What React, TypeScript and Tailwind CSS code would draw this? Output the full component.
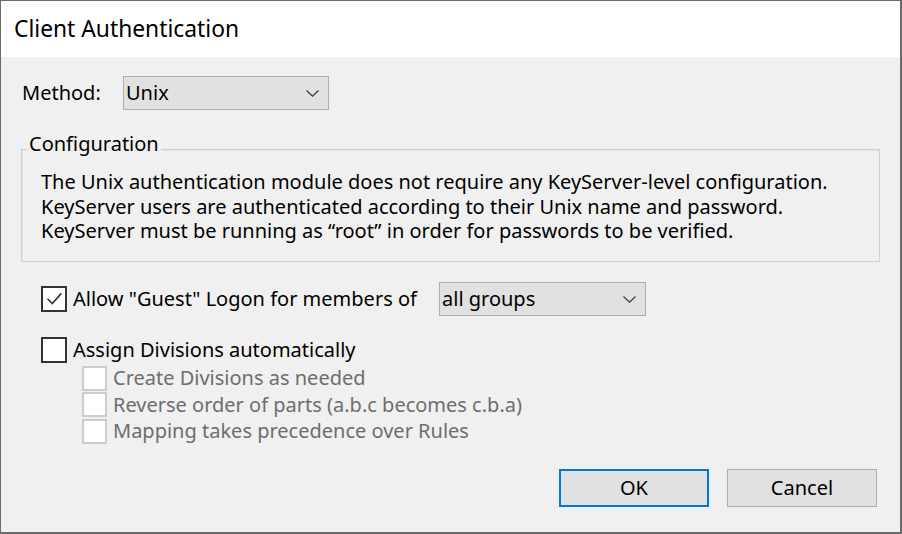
import React from "react";

function Chevron() {
  return (
    <svg width="13" height="7" viewBox="0 0 13 7" className="shrink-0">
      <path d="M0.5 0.5 L6.5 6.2 L12.5 0.5" fill="none" stroke="#333333" strokeWidth="1.1" />
    </svg>
  );
}

function Dropdown({ value, width }: { value: string; width: string }) {
  return (
    <div className={`flex h-[34px] items-center justify-between border border-[#adadad] bg-[#e1e1e1] pl-[2px] pr-[9px] ${width}`}>
      <span className="leading-[24px] text-black">{value}</span>
      <Chevron />
    </div>
  );
}

function CheckBox({ checked, disabled }: { checked?: boolean; disabled?: boolean }) {
  return (
    <div
      className={
        disabled
          ? "flex h-[25px] w-[25px] shrink-0 items-center justify-center border-2 border-[#cccccc] bg-white"
          : "flex h-[26px] w-[26px] shrink-0 items-center justify-center border-2 border-[#333333] bg-white"
      }
    >
      {checked && (
        <svg width="20" height="20" viewBox="0 0 20 20">
          <path d="M3.5 9.8 L8.3 14.6 L17.3 4.4" fill="none" stroke="#333333" strokeWidth="1.6" />
        </svg>
      )}
    </div>
  );
}

export default function App() {
  return (
    <div className="flex h-[534px] w-[902px] flex-col border-b-2 border-l border-r-2 border-t border-[#6b6b6b] bg-[#f0f0f0] font-['Noto_Sans',sans-serif] text-[20px] text-black">
      <div className="flex h-[56px] items-center bg-white pl-[13px]">
        <span className="text-[22.8px] leading-[30px] text-black">Client Authentication</span>
      </div>

      <div className="flex flex-1 flex-col pl-[20px] pr-[23px]">
        <div className="mt-[19px] flex items-center">
          <span className="ml-[1px] w-[101px] leading-[24px]">Method:</span>
          <Dropdown value="Unix" width="w-[206px]" />
        </div>

        <div className="relative mt-[39px] w-[859px] border border-[#cfcfcf] pb-[17.5px] pl-[19px] pt-[20px] shadow-[inset_1px_1px_0_#e4e4e4]">
          <span className="absolute left-[5px] top-[-18px] bg-[#f0f0f0] px-[2px] leading-[24px]">Configuration</span>
          <p className="leading-[24.5px]">
            The Unix authentication module does not require any KeyServer-level configuration.
            <br />
            KeyServer users are authenticated according to their Unix name and password.
            <br />
            KeyServer must be running as “root” in order for passwords to be verified.
          </p>
        </div>

        <div className="ml-[20px] mt-[20px] flex items-center">
          <CheckBox checked />
          <span className="ml-[6px] w-[366px] leading-[24px]">Allow "Guest" Logon for members of</span>
          <Dropdown value="all groups" width="w-[207px]" />
        </div>

        <div className="ml-[20px] mt-[21px] flex items-center">
          <CheckBox />
          <span className="ml-[6px] leading-[24px]">Assign Divisions automatically</span>
        </div>

        <div className="ml-[61px] mt-[2px] flex flex-col text-[#6d6d6d]">
          <div className="flex h-[26.5px] items-center gap-[6px]">
            <CheckBox disabled />
            <span className="leading-[24px]">Create Divisions as needed</span>
          </div>
          <div className="flex h-[26.5px] items-center gap-[6px]">
            <CheckBox disabled />
            <span className="leading-[24px]">Reverse order of parts (a.b.c becomes c.b.a)</span>
          </div>
          <div className="flex h-[26.5px] items-center gap-[6px]">
            <CheckBox disabled />
            <span className="leading-[24px]">Mapping takes precedence over Rules</span>
          </div>
        </div>

        <div className="mt-[24px] flex justify-end gap-[18px]">
          <button className="flex h-[38px] w-[150px] items-center justify-center border-2 border-[#0078d7] bg-[#e1e1e1] leading-[24px] text-black">
            OK
          </button>
          <button className="flex h-[38px] w-[150px] items-center justify-center border border-[#adadad] bg-[#e1e1e1] leading-[24px] text-black">
            Cancel
          </button>
        </div>
      </div>
    </div>
  );
}
